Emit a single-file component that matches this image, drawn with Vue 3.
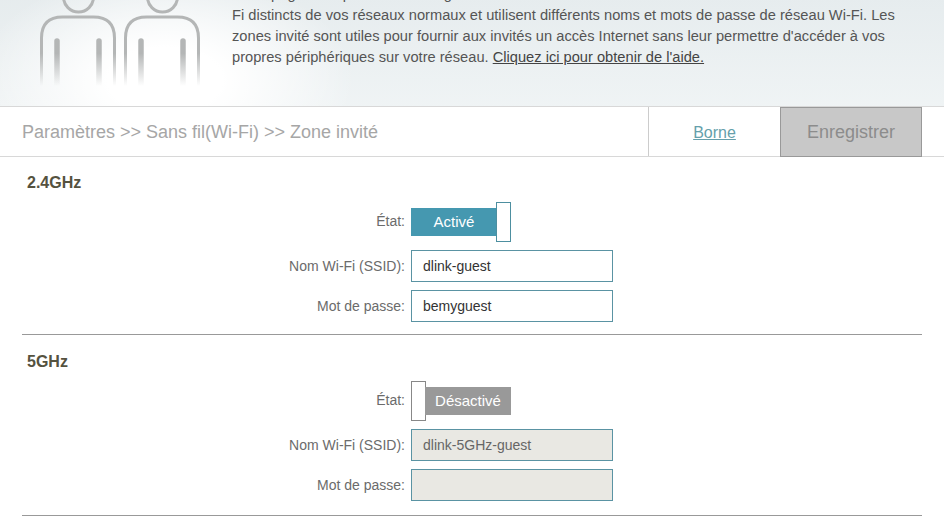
<template>
  <div class="page">
    <header class="banner">
      <svg class="people" width="210" height="100" viewBox="0 0 210 100">
        <defs>
          <linearGradient id="fade" gradientUnits="userSpaceOnUse" x1="0" y1="0" x2="0" y2="86">
            <stop offset="0" stop-color="#b4b6b6" />
            <stop offset="0.62" stop-color="#b4b6b6" />
            <stop offset="1" stop-color="#b4b6b6" stop-opacity="0" />
          </linearGradient>
        </defs>
        <g v-for="p in people" :key="p.head" fill="none" stroke="url(#fade)">
          <circle :cx="p.head" cy="-3" r="15" stroke-width="3" />
          <path :d="p.body" stroke-width="3" />
          <path :d="p.armLeft" stroke-width="5.5" stroke-linecap="round" />
          <path :d="p.armRight" stroke-width="5.5" stroke-linecap="round" />
        </g>
      </svg>
      <p class="intro">
        Cette page vous permet de configurer une zone invité. Les zones invité fournissent des réseaux Wi-<br>
        Fi distincts de vos réseaux normaux et utilisent différents noms et mots de passe de réseau Wi-Fi. Les<br>
        zones invité sont utiles pour fournir aux invités un accès Internet sans leur permettre d'accéder à vos<br>
        propres périphériques sur votre réseau. <a class="help">Cliquez ici pour obtenir de l'aide.</a>
      </p>
    </header>

    <nav class="crumbs">
      <div class="path">Paramètres &gt;&gt; Sans fil(Wi-Fi) &gt;&gt; Zone invité</div>
      <a class="tab">Borne</a>
      <button class="save">Enregistrer</button>
    </nav>

    <section v-for="band in bands" :key="band.name" class="band" :class="band.cls">
      <h2>{{ band.name }}</h2>
      <div class="row state">
        <label>État:</label>
        <div class="switch" :class="{ off: !band.on }">
          <span class="track">{{ band.on ? 'Activé' : 'Désactivé' }}</span>
          <span class="knob"></span>
        </div>
      </div>
      <div class="row">
        <label>Nom Wi-Fi (SSID):</label>
        <input type="text" :value="band.ssid" :disabled="!band.on">
      </div>
      <div class="row">
        <label>Mot de passe:</label>
        <input type="text" :value="band.pass" :disabled="!band.on">
      </div>
    </section>
  </div>
</template>

<script setup>
function person(x) {
  const l = x - 36.5
  const r = x + 36.5
  return {
    head: x + 0.5,
    body: `M${l} 86 V38 Q${l} 17 ${l + 21} 17 H${r - 21} Q${r} 17 ${r} 38 V86`,
    armLeft: `M${x - 21} 41 V86`,
    armRight: `M${x + 21} 41 V86`,
  }
}
const people = [person(78), person(162)]

const bands = [
  { name: '2.4GHz', on: true, ssid: 'dlink-guest', pass: 'bemyguest', cls: 'first' },
  { name: '5GHz', on: false, ssid: 'dlink-5GHz-guest', pass: '', cls: 'second' },
]
</script>

<style>
html, body {
  margin: 0;
  background: #fff;
}
</style>

<style scoped>
.page {
  width: 944px;
  height: 525px;
  overflow: hidden;
  font-family: "Liberation Sans", Arial, sans-serif;
  color: #666;
}
.banner {
  display: flex;
  height: 106px;
  overflow: hidden;
  border-bottom: 1px solid #d8d8d8;
  background:
    radial-gradient(ellipse 190px 110px at 165px 80px, #fff 30%, rgba(255,255,255,0) 100%),
    linear-gradient(180deg, rgba(230,236,238,0.9) 0, rgba(240,244,245,0.9) 100%),
    linear-gradient(90deg, #e6e9e9 0, #f2f4f4 160px, #f1f5f5 240px, #e9eff1 340px, #e8eef0 100%);
}
.people {
  flex: none;
  width: 210px;
  margin-right: 22px;
}
.intro {
  margin: -16px 0 0;
  font-size: 14.66px;
  line-height: 21px;
  color: #555;
  white-space: nowrap;
}
.help {
  color: #444;
  text-decoration: underline;
}
.crumbs {
  display: flex;
  height: 49px;
  border-bottom: 1px solid #d8d8d8;
  padding-right: 22px;
}
.path {
  flex: 1;
  padding-left: 22px;
  font-size: 18px;
  line-height: 50px;
  color: #a6a6a6;
}
.tab {
  width: 132px;
  box-sizing: border-box;
  border-left: 1px solid #ccc;
  text-align: center;
  font-size: 16px;
  line-height: 52px;
  color: #659fab;
  text-decoration: underline;
}
.save {
  width: 142px;
  box-sizing: border-box;
  border: 1px solid #999;
  margin-bottom: -1px;
  padding: 0;
  background: #c8c8c8;
  font: 18px "Liberation Sans", Arial, sans-serif;
  color: #8c8c8c;
}
.band {
  margin: 0 22px;
  border-bottom: 1px solid #999;
}
.first {
  padding-bottom: 12px;
}
.second {
  padding-bottom: 14px;
}
h2 {
  margin: 0;
  padding: 16px 0 9px 5px;
  font-size: 16px;
  line-height: 20px;
  color: #55523f;
}
.second h2 {
  padding-top: 17px;
}
.row {
  display: flex;
  align-items: center;
  gap: 6px;
  margin-top: 8px;
  font-size: 14px;
}
.row.state {
  margin-top: 0;
}
.state label {
  padding-bottom: 2px;
}
label {
  width: 383px;
  text-align: right;
  color: #6b6b6b;
}
.switch {
  display: flex;
  align-items: center;
  width: 100px;
  height: 40px;
}
.switch.off {
  flex-direction: row-reverse;
}
.track {
  width: 86px;
  height: 28px;
  background: #4598b0;
  color: #fff;
  text-align: center;
  line-height: 28px;
  font-size: 15px;
}
.off .track {
  background: #999;
}
.knob {
  box-sizing: border-box;
  width: 15px;
  height: 40px;
  margin-left: -1px;
  border: 1px solid #4d8fa0;
  background: #fff;
}
.off .knob {
  margin: 0 -1px 0 0;
  border-color: #888;
}
input {
  box-sizing: border-box;
  width: 202px;
  height: 32px;
  padding: 0 0 0 11px;
  border: 1px solid #5a93a3;
  background: #fff;
  font: 14px "Liberation Sans", Arial, sans-serif;
  color: #333;
  outline: none;
}
input:disabled {
  background: #e9e8e3;
  color: #666;
}
</style>
